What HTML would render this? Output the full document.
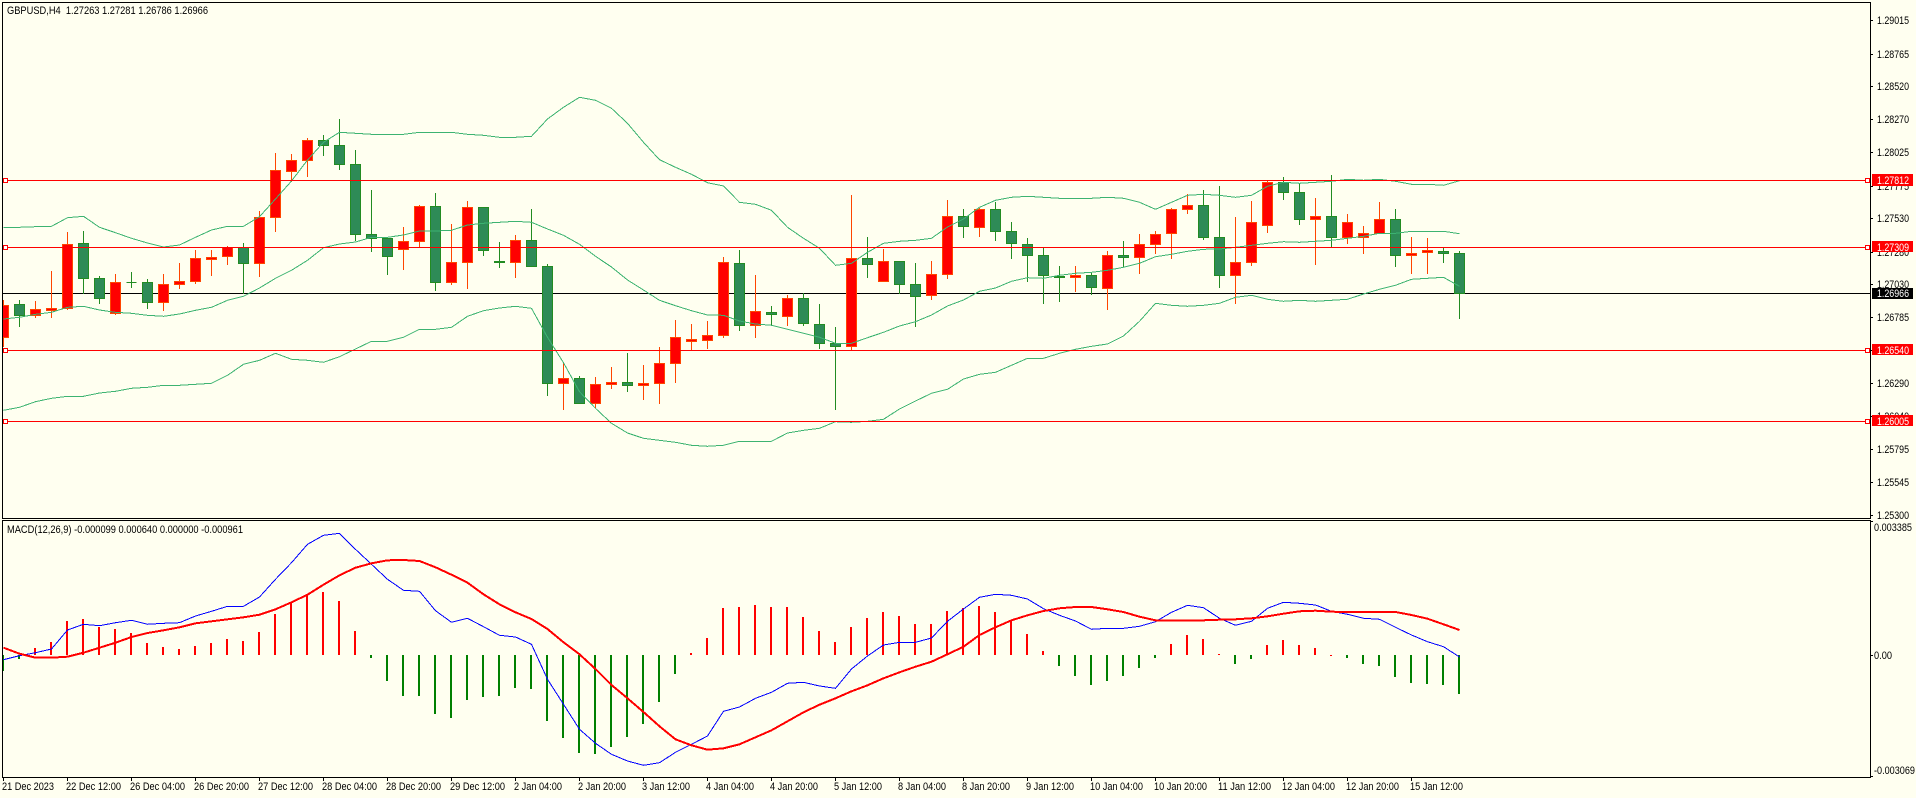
<!DOCTYPE html>
<html lang="en">
<head>
<meta charset="utf-8">
<title>GBPUSD,H4</title>
<style>
html,body{margin:0;padding:0;background:#fffff0;width:1916px;height:798px;overflow:hidden}
svg{display:block}
text{font-family:"Liberation Sans",Arial,sans-serif;font-size:11px;fill:#000;white-space:pre}
.c{shape-rendering:crispEdges;fill:none}
</style>
</head>
<body>
<svg width="1916" height="798" viewBox="0 0 1916 798" xmlns="http://www.w3.org/2000/svg">
<defs><clipPath id="m"><rect x="3" y="3" width="1867" height="515"/></clipPath></defs>
<rect width="1916" height="798" fill="#fffff0"/>
<g clip-path="url(#m)">
<path class="c" stroke="#000" d="M3 293.5H1870"/>
<!-- bull wicks -->
<path class="c" stroke="#ff4500" d="M3.5 300V347M35.5 301V318M51.5 271V318M67.5 232V310M115.5 274V315M163.5 274V311M179.5 263V289M195.5 250V284M211.5 250V276M227.5 246V265M259.5 211V277M275.5 153V232M291.5 154V182M307.5 138V177M403.5 227V270M419.5 205V248M451.5 224V285M467.5 201V289M515.5 235V278M563.5 362V410M595.5 377V408M611.5 367V389M643.5 365V400M659.5 347V404M675.5 320V383M691.5 324V350M707.5 321V349M723.5 257V338M755.5 275V338M787.5 295V326M851.5 195V351M883.5 249V282M931.5 261V300M947.5 200V279M979.5 208V237M1075.5 266V292M1107.5 251V310M1139.5 234V274M1155.5 231V254M1171.5 208V259M1187.5 194V214M1235.5 217V304M1251.5 201V266M1267.5 181V233M1315.5 198V265M1347.5 214V244M1363.5 226V254M1379.5 202V234M1411.5 237V274M1427.5 238V274"/>
<!-- bear wicks -->
<path class="c" stroke="#228b22" d="M19.5 300V327M83.5 231V294M99.5 276V304M131.5 272V288M147.5 279V309M243.5 243V294M323.5 135V156M339.5 119V170M355.5 150V241M371.5 190V252M387.5 238V275M435.5 193V291M483.5 207V256M499.5 242V268M531.5 209V267M547.5 264V396M579.5 376V404M627.5 353V392M739.5 250V331M771.5 306V326M803.5 293V326M819.5 304V349M835.5 327V410M867.5 237V278M899.5 261V294M915.5 263V327M963.5 209V238M995.5 202V241M1011.5 222V259M1027.5 238V282M1043.5 248V304M1059.5 266V302M1091.5 273V295M1123.5 241V267M1203.5 190V240M1219.5 186V288M1283.5 177V200M1299.5 183V225M1331.5 175V248M1395.5 209V267M1443.5 248V263M1459.5 251V319"/>
<!-- bull bodies -->
<path class="c" style="fill:#f00" stroke="#ff4500" d="M-1.5 305.5h10V337.5h-10zM30.5 309.5h10V315.5h-10zM46.5 308.5h10V310.5h-10zM62.5 244.5h10V308.5h-10zM110.5 282.5h10V313.5h-10zM158.5 284.5h10V302.5h-10zM174.5 281.5h10V284.5h-10zM190.5 258.5h10V281.5h-10zM206.5 257.5h10V259.5h-10zM222.5 247.5h10V256.5h-10zM254.5 217.5h10V263.5h-10zM270.5 170.5h10V217.5h-10zM286.5 160.5h10V171.5h-10zM302.5 140.5h10V160.5h-10zM398.5 241.5h10V249.5h-10zM414.5 206.5h10V241.5h-10zM446.5 262.5h10V282.5h-10zM462.5 207.5h10V262.5h-10zM510.5 240.5h10V262.5h-10zM558.5 378.5h10V383.5h-10zM590.5 384.5h10V403.5h-10zM606.5 382.5h10V384.5h-10zM638.5 383.5h10V385.5h-10zM654.5 363.5h10V383.5h-10zM670.5 337.5h10V363.5h-10zM686.5 339.5h10V341.5h-10zM702.5 335.5h10V340.5h-10zM718.5 262.5h10V335.5h-10zM750.5 311.5h10V325.5h-10zM782.5 298.5h10V316.5h-10zM846.5 258.5h10V346.5h-10zM878.5 261.5h10V281.5h-10zM926.5 274.5h10V295.5h-10zM942.5 216.5h10V274.5h-10zM974.5 209.5h10V227.5h-10zM1070.5 275.5h10V277.5h-10zM1102.5 255.5h10V288.5h-10zM1134.5 244.5h10V257.5h-10zM1150.5 234.5h10V244.5h-10zM1166.5 209.5h10V233.5h-10zM1182.5 205.5h10V209.5h-10zM1230.5 262.5h10V275.5h-10zM1246.5 222.5h10V262.5h-10zM1262.5 182.5h10V225.5h-10zM1310.5 216.5h10V219.5h-10zM1342.5 222.5h10V237.5h-10zM1358.5 233.5h10V237.5h-10zM1374.5 219.5h10V233.5h-10zM1406.5 253.5h10V255.5h-10zM1422.5 250.5h10V252.5h-10z"/>
<!-- bear bodies -->
<path class="c" style="fill:#2e8b57" stroke="#228b22" d="M14.5 304.5h10V315.5h-10zM78.5 243.5h10V278.5h-10zM94.5 278.5h10V298.5h-10zM126.5 282.5h10V282.5h-10zM142.5 282.5h10V302.5h-10zM238.5 247.5h10V263.5h-10zM318.5 140.5h10V145.5h-10zM334.5 145.5h10V164.5h-10zM350.5 164.5h10V234.5h-10zM366.5 234.5h10V238.5h-10zM382.5 238.5h10V256.5h-10zM430.5 206.5h10V282.5h-10zM478.5 207.5h10V250.5h-10zM494.5 261.5h10V262.5h-10zM526.5 240.5h10V266.5h-10zM542.5 266.5h10V383.5h-10zM574.5 378.5h10V403.5h-10zM622.5 382.5h10V385.5h-10zM734.5 263.5h10V325.5h-10zM766.5 312.5h10V314.5h-10zM798.5 298.5h10V323.5h-10zM814.5 324.5h10V343.5h-10zM830.5 343.5h10V346.5h-10zM862.5 258.5h10V264.5h-10zM894.5 261.5h10V284.5h-10zM910.5 284.5h10V296.5h-10zM958.5 216.5h10V226.5h-10zM990.5 209.5h10V231.5h-10zM1006.5 231.5h10V243.5h-10zM1022.5 244.5h10V255.5h-10zM1038.5 255.5h10V275.5h-10zM1054.5 276.5h10V277.5h-10zM1086.5 275.5h10V287.5h-10zM1118.5 255.5h10V257.5h-10zM1198.5 205.5h10V237.5h-10zM1214.5 237.5h10V275.5h-10zM1278.5 182.5h10V192.5h-10zM1294.5 192.5h10V219.5h-10zM1326.5 216.5h10V237.5h-10zM1390.5 219.5h10V255.5h-10zM1438.5 251.5h10V253.5h-10zM1454.5 253.5h10V293.5h-10z"/>
<!-- Bollinger bands -->
<g class="c" stroke="#3cb371" transform="translate(.5 0)">
<polyline points="3,227.3 19,227.3 35,226.7 51,226.3 67,217.7 83,216.3 99,227.3 115,232.7 131,238.3 147,243 163,247 179,245 195,237.3 211,230 227,226.3 243,226.3 259,216.7 275,199 291,181 307,160 323,142.3 339,132.3 355,133.3 371,134.3 387,134.3 403,134.3 419,132.3 435,132.3 451,132.3 467,134.3 483,135.3 499,137.3 515,137.3 531,136.3 547,119 563,107.3 579,97.3 595,100.3 611,108.3 627,123.3 643,142.3 659,159.7 675,167.3 691,174.3 707,182.7 723,186 739,202.3 755,204.3 771,210.3 787,227.3 803,238.3 819,248.3 835,265.3 851,263.3 867,252.3 883,243.3 899,241.3 915,240.3 931,238.3 947,227 963,219 979,207.3 995,200.3 1011,197.3 1027,196.3 1043,197.3 1059,198.3 1075,198.3 1091,198.3 1107,197.3 1123,198.3 1139,202.3 1155,209.3 1171,202.3 1187,195.3 1203,194.3 1219,195.3 1235,197.3 1251,195.3 1267,186.3 1283,182.3 1299,183.3 1315,182.3 1331,181.3 1347,179.3 1363,180.3 1379,179.3 1395,181.3 1411,184.3 1427,184.3 1443,185.3 1459,180.7"/>
<polyline points="3,319 19,317.3 35,314.3 51,312.3 67,307.3 83,306.3 99,310 115,312.3 131,313.3 147,315.3 163,316.3 179,314 195,310.3 211,307.3 227,300.3 243,296.3 259,288 275,278.3 291,270.3 307,260.3 323,247.7 339,244 355,242 371,237.3 387,237.3 403,235 419,231 435,231 451,230.3 467,225 483,223.3 499,222.3 515,221.3 531,222.3 547,229 563,235.3 579,244.3 595,256.3 611,267 627,280 643,290 659,300.3 675,305.7 691,310.7 707,315 723,315.3 739,321 755,324 771,325.3 787,329.3 803,333.3 819,337.3 835,343.3 851,343.3 867,337.7 883,332.3 899,326 915,321.7 931,315 947,306 963,300 979,291.3 995,288 1011,281.3 1027,277.7 1043,278.3 1059,275.3 1075,273.3 1091,272.3 1107,270.3 1123,267.3 1139,263.3 1155,256.7 1171,254.3 1187,251.3 1203,249.3 1219,249 1235,247.3 1251,245.3 1267,243.3 1283,241.7 1299,242.3 1315,241.3 1331,240.3 1347,238.3 1363,236.3 1379,233.3 1395,233.3 1411,231.3 1427,231.3 1443,231.3 1459,233.7"/>
<polyline points="3,410.3 19,407.3 35,401.7 51,398.3 67,396.3 83,396.3 99,393 115,391.3 131,388.3 147,387.3 163,385.3 179,385.3 195,384.3 211,383.3 227,375.3 243,364.3 259,360.3 275,353.3 291,359.3 307,360.3 323,362.3 339,356.7 355,349 371,341.3 387,341.3 403,337.3 419,329.3 435,329.3 451,327.3 467,316.3 483,310.7 499,308 515,306.3 531,308.3 547,337.3 563,362.7 579,391.7 595,408.3 611,423.3 627,433 643,438.3 659,440.3 675,442.3 691,445.3 707,446.3 723,445.3 739,441.3 755,441.3 771,441.3 787,433 803,430.3 819,428.3 835,421.7 851,422.3 867,421.3 883,419.3 899,409 915,401 931,393.3 947,389.3 963,379 979,374.3 995,372.3 1011,365.3 1027,358.3 1043,358.3 1059,353.3 1075,349.3 1091,346.3 1107,344 1123,336 1139,321.3 1155,303.3 1171,305.3 1187,306.3 1203,305.3 1219,303.3 1235,297.3 1251,295.3 1267,299.3 1283,301.3 1299,300.3 1315,301.3 1331,300.3 1347,299.3 1363,294 1379,289.3 1395,285.3 1411,279.3 1427,278.3 1443,277.3 1459,286.3"/>
</g>
<!-- horizontal objects -->
<path class="c" stroke="#f00" d="M3 180.5H1870M3 247.5H1870M3 350.5H1870M3 421.5H1870"/>
<path class="c" stroke="#f00" style="fill:#fff" d="M3.5 178.5h4v4h-4zM3.5 245.5h4v4h-4zM3.5 348.5h4v4h-4zM3.5 419.5h4v4h-4zM1865.5 178.5h4v4h-4zM1865.5 245.5h4v4h-4zM1865.5 348.5h4v4h-4zM1865.5 419.5h4v4h-4z"/>
</g>
<!-- MACD histogram -->
<path class="c" stroke="#f00" stroke-width="2" d="M35 648V655M51 642V655M67 621V655M83 619V655M99 627V655M115 629V655M131 633V655M147 643V655M163 647V655M179 649V655M195 646V655M211 643V655M227 639V655M243 641V655M259 632V655M275 614V655M291 603V655M307 594V655M323 592V655M339 601V655M355 631V655M691 653V655M707 638V655M723 608V655M739 607V655M755 605V655M771 607V655M787 607V655M803 617V655M819 631V655M835 642V655M851 627V655M867 618V655M883 612V655M899 616V655M915 624V655M931 624V655M947 611V655M963 608V655M979 606V655M995 612V655M1011 621V655M1027 634V655M1043 651V655M1171 644V655M1187 635V655M1203 639V655M1219 654V655M1267 645V655M1283 640V655M1299 645V655M1315 648V655M1331 655V656"/>
<path class="c" stroke="#008000" stroke-width="2" d="M3 655V671M19 655V659M371 655V658M387 655V681M403 655V696M419 655V696M435 655V714M451 655V718M467 655V700M483 655V697M499 655V696M515 655V688M531 655V689M547 655V721M563 655V738M579 655V753M595 655V754M611 655V747M627 655V737M643 655V724M659 655V702M675 655V674M1059 655V666M1075 655V676M1091 655V685M1107 655V681M1123 655V676M1139 655V668M1155 655V658M1235 655V664M1251 655V659M1347 655V658M1363 655V664M1379 655V666M1395 655V677M1411 655V683M1427 655V684M1443 655V685M1459 655V694"/>
<!-- MACD line -->
<g class="c" transform="translate(.5 0)">
<polyline stroke="#00f" points="3,659.7 19,655.7 35,652.7 51,649 67,630 83,624.3 99,625.7 115,622.7 131,620.3 147,624.3 163,623.3 179,622.7 195,616 211,611.3 227,606.3 243,606.3 259,597 275,579.3 291,562.7 307,544.3 323,535.3 339,533.3 355,549.3 371,564.3 387,579.3 403,590.3 419,591.3 435,610.7 451,622.3 467,618.3 483,626.7 499,635.3 515,637 531,644.3 547,679.3 563,704.3 579,729.3 595,743.3 611,754.3 627,761 643,765.3 659,762.7 675,752.3 691,744.3 707,736 723,711.3 739,707 755,698.3 771,692.3 787,683.3 803,682.3 819,686 835,688.3 851,669 867,656 883,645 899,642.3 915,642.3 931,638 947,621.3 963,609 979,597.3 995,594.3 1011,595.3 1027,599 1043,608.7 1059,615.3 1075,621 1091,629.3 1107,628.3 1123,628.3 1139,626.3 1155,621.7 1171,612.3 1187,605.3 1203,607.7 1219,618.3 1235,625.3 1251,621.3 1267,608.3 1283,602.3 1299,603.3 1315,605 1331,611.3 1347,614.3 1363,618.3 1379,619.3 1395,627.3 1411,635 1427,641.7 1443,646.7 1459,657"/>
<polyline stroke="#f00" stroke-width="2" points="3,647.7 19,653.7 35,657.7 51,657.7 67,656.7 83,652.7 99,647.7 115,642.7 131,637 147,633 163,630.3 179,627.3 195,623.3 211,621.3 227,619.3 243,617.3 259,614.7 275,609.3 291,602.3 307,594.7 323,584.7 339,575.3 355,567.7 371,563.3 387,560.3 403,560 419,561 435,567.3 451,574.7 467,582.7 483,594.3 499,604.3 515,612.3 531,619 547,629 563,642.3 579,654.3 595,669 611,685 627,698.3 643,712 659,726.3 675,739.3 691,745.3 707,749.7 723,748.3 739,744.3 755,737.3 771,730.3 787,721.3 803,712.3 819,704.7 835,698.3 851,691.3 867,685.3 883,678.3 899,672.3 915,666.7 931,661.7 947,654.3 963,646.7 979,635 995,627.3 1011,620.3 1027,615.3 1043,611 1059,608.3 1075,607 1091,607 1107,609.3 1123,612 1139,616.7 1155,620.3 1171,620.7 1187,620.7 1203,620.3 1219,619.7 1235,619.3 1251,618.3 1267,616.3 1283,613.7 1299,611.3 1315,610.7 1331,611.7 1347,612 1363,612 1379,612 1395,612 1411,615 1427,618.7 1443,624.3 1459,630"/>
</g>
<!-- frames and ticks -->
<path class="c" stroke="#000" d="M2.5 2.5H1870.5V518.5H2.5ZM2.5 520.5H1870.5V777.5H2.5Z"/>
<path class="c" stroke="#000" d="M1871 20.5h2M1871 54.5h2M1871 86.5h2M1871 119.5h2M1871 152.5h2M1871 186.5h2M1871 218.5h2M1871 252.5h2M1871 284.5h2M1871 317.5h2M1871 350.5h2M1871 383.5h2M1871 416.5h2M1871 449.5h2M1871 482.5h2M1871 515.5h2M1871 521.5h2M1871 655.5h2M1871 776.5h2M3.5 778v3M67.5 778v3M131.5 778v3M195.5 778v3M259.5 778v3M323.5 778v3M387.5 778v3M451.5 778v3M515.5 778v3M579.5 778v3M643.5 778v3M707.5 778v3M771.5 778v3M835.5 778v3M899.5 778v3M963.5 778v3M1027.5 778v3M1091.5 778v3M1155.5 778v3M1219.5 778v3M1283.5 778v3M1347.5 778v3M1411.5 778v3"/>
<!-- titles -->
<text x="7" y="14" textLength="201" lengthAdjust="spacingAndGlyphs">GBPUSD,H4  1.27263 1.27281 1.26786 1.26966</text>
<text x="7" y="533" textLength="236" lengthAdjust="spacingAndGlyphs">MACD(12,26,9) -0.000099 0.000640 0.000000 -0.000961</text>
<!-- price axis -->
<text x="1877" y="24" textLength="32" lengthAdjust="spacingAndGlyphs">1.29015</text>
<text x="1877" y="58" textLength="32" lengthAdjust="spacingAndGlyphs">1.28765</text>
<text x="1877" y="90" textLength="32" lengthAdjust="spacingAndGlyphs">1.28520</text>
<text x="1877" y="123" textLength="32" lengthAdjust="spacingAndGlyphs">1.28270</text>
<text x="1877" y="156" textLength="32" lengthAdjust="spacingAndGlyphs">1.28025</text>
<text x="1877" y="190" textLength="32" lengthAdjust="spacingAndGlyphs">1.27775</text>
<text x="1877" y="222" textLength="32" lengthAdjust="spacingAndGlyphs">1.27530</text>
<text x="1877" y="256" textLength="32" lengthAdjust="spacingAndGlyphs">1.27280</text>
<text x="1877" y="288" textLength="32" lengthAdjust="spacingAndGlyphs">1.27030</text>
<text x="1877" y="321" textLength="32" lengthAdjust="spacingAndGlyphs">1.26785</text>
<text x="1877" y="354" textLength="32" lengthAdjust="spacingAndGlyphs">1.26540</text>
<text x="1877" y="387" textLength="32" lengthAdjust="spacingAndGlyphs">1.26290</text>
<text x="1877" y="420" textLength="32" lengthAdjust="spacingAndGlyphs">1.26040</text>
<text x="1877" y="453" textLength="32" lengthAdjust="spacingAndGlyphs">1.25795</text>
<text x="1877" y="486" textLength="32" lengthAdjust="spacingAndGlyphs">1.25545</text>
<text x="1877" y="519" textLength="32" lengthAdjust="spacingAndGlyphs">1.25300</text>
<!-- price labels -->
<rect x="1872" y="174" width="41" height="12" fill="#f00"/>
<rect x="1872" y="241" width="41" height="11" fill="#f00"/>
<rect x="1872" y="344" width="41" height="11" fill="#f00"/>
<rect x="1872" y="415" width="41" height="11" fill="#f00"/>
<rect x="1872" y="288" width="41" height="11" fill="#000"/>
<text x="1877" y="184" textLength="32" lengthAdjust="spacingAndGlyphs" style="fill:#fff">1.27812</text>
<text x="1877" y="251" textLength="32" lengthAdjust="spacingAndGlyphs" style="fill:#fff">1.27309</text>
<text x="1877" y="354" textLength="32" lengthAdjust="spacingAndGlyphs" style="fill:#fff">1.26540</text>
<text x="1877" y="425" textLength="32" lengthAdjust="spacingAndGlyphs" style="fill:#fff">1.26005</text>
<text x="1877" y="297" textLength="32" lengthAdjust="spacingAndGlyphs" style="fill:#fff">1.26966</text>
<!-- MACD axis -->
<text x="1874" y="531" textLength="38" lengthAdjust="spacingAndGlyphs">0.003385</text>
<text x="1874" y="659" textLength="18" lengthAdjust="spacingAndGlyphs">0.00</text>
<text x="1874" y="774" textLength="41" lengthAdjust="spacingAndGlyphs">-0.003069</text>
<!-- time axis -->
<text x="2" y="790" textLength="52" lengthAdjust="spacingAndGlyphs">21 Dec 2023</text>
<text x="66" y="790" textLength="55" lengthAdjust="spacingAndGlyphs">22 Dec 12:00</text>
<text x="130" y="790" textLength="55" lengthAdjust="spacingAndGlyphs">26 Dec 04:00</text>
<text x="194" y="790" textLength="55" lengthAdjust="spacingAndGlyphs">26 Dec 20:00</text>
<text x="258" y="790" textLength="55" lengthAdjust="spacingAndGlyphs">27 Dec 12:00</text>
<text x="322" y="790" textLength="55" lengthAdjust="spacingAndGlyphs">28 Dec 04:00</text>
<text x="386" y="790" textLength="55" lengthAdjust="spacingAndGlyphs">28 Dec 20:00</text>
<text x="450" y="790" textLength="55" lengthAdjust="spacingAndGlyphs">29 Dec 12:00</text>
<text x="514" y="790" textLength="48" lengthAdjust="spacingAndGlyphs">2 Jan 04:00</text>
<text x="578" y="790" textLength="48" lengthAdjust="spacingAndGlyphs">2 Jan 20:00</text>
<text x="642" y="790" textLength="48" lengthAdjust="spacingAndGlyphs">3 Jan 12:00</text>
<text x="706" y="790" textLength="48" lengthAdjust="spacingAndGlyphs">4 Jan 04:00</text>
<text x="770" y="790" textLength="48" lengthAdjust="spacingAndGlyphs">4 Jan 20:00</text>
<text x="834" y="790" textLength="48" lengthAdjust="spacingAndGlyphs">5 Jan 12:00</text>
<text x="898" y="790" textLength="48" lengthAdjust="spacingAndGlyphs">8 Jan 04:00</text>
<text x="962" y="790" textLength="48" lengthAdjust="spacingAndGlyphs">8 Jan 20:00</text>
<text x="1026" y="790" textLength="48" lengthAdjust="spacingAndGlyphs">9 Jan 12:00</text>
<text x="1090" y="790" textLength="53" lengthAdjust="spacingAndGlyphs">10 Jan 04:00</text>
<text x="1154" y="790" textLength="53" lengthAdjust="spacingAndGlyphs">10 Jan 20:00</text>
<text x="1218" y="790" textLength="53" lengthAdjust="spacingAndGlyphs">11 Jan 12:00</text>
<text x="1282" y="790" textLength="53" lengthAdjust="spacingAndGlyphs">12 Jan 04:00</text>
<text x="1346" y="790" textLength="53" lengthAdjust="spacingAndGlyphs">12 Jan 20:00</text>
<text x="1410" y="790" textLength="53" lengthAdjust="spacingAndGlyphs">15 Jan 12:00</text>
</svg>
</body>
</html>
